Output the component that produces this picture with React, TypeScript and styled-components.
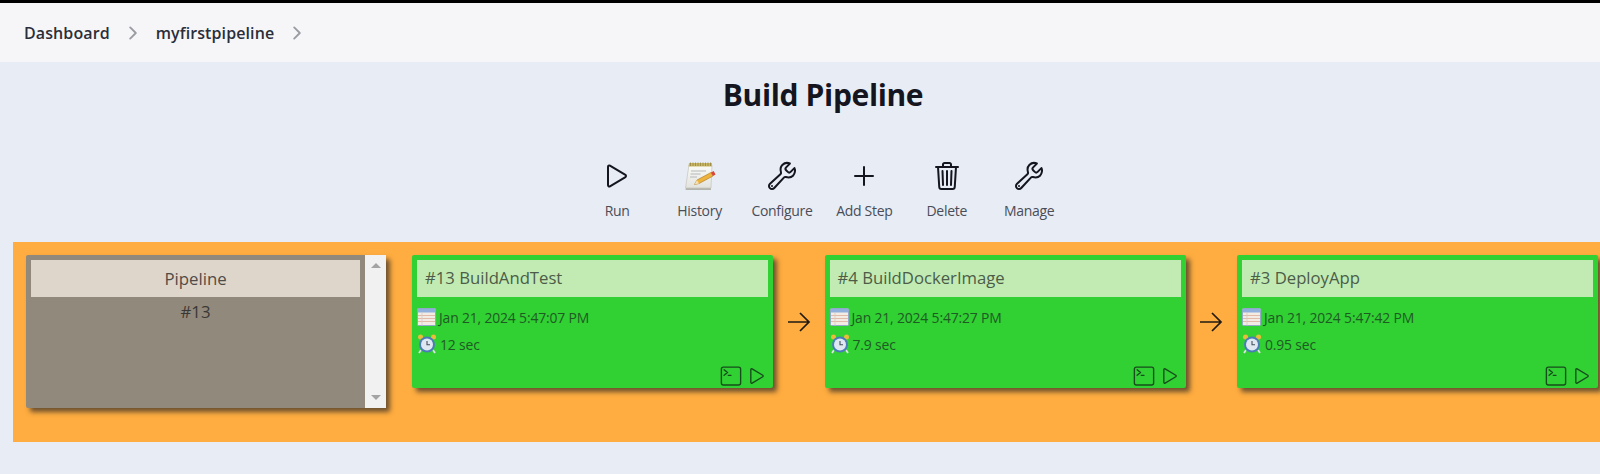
import React from "react";
import styled, { createGlobalStyle } from "styled-components";
import {
  IoAddOutline,
  IoBuildOutline,
  IoChevronForwardOutline,
  IoPlayOutline,
  IoTerminalOutline,
  IoTrashOutline,
} from "react-icons/io5";

const GlobalStyle = createGlobalStyle`
  html, body {
    margin: 0;
    padding: 0;
    height: 474px;
    overflow: hidden;
    background: #e8ecf4;
  }
  body {
    font-family: "Open Sans", "Noto Sans", "Liberation Sans", sans-serif;
  }
`;

const Page = styled.div`
  width: 1600px;
  height: 474px;
  overflow: hidden;
  border-top: 3px solid #000;
  box-sizing: border-box;
`;

const Breadcrumbs = styled.nav`
  height: 59px;
  background: #f6f6f9;
  display: flex;
  align-items: center;
  padding-left: 24px;
  color: #2b2e38;
  font-size: 16px;
  font-weight: 600;
  letter-spacing: 0.1px;
`;

const Crumb = styled.span`
  line-height: 20px;
`;

const CrumbSep = styled.span`
  display: flex;
  color: #9a9ca3;
  font-size: 20px;
  margin: 0 13px;
`;

const Title = styled.h1`
  margin: 12px 0 0;
  padding-left: 46px;
  height: 41px;
  line-height: 41px;
  text-align: center;
  color: #14151f;
  font-size: 30px;
  font-weight: 700;
  letter-spacing: -0.35px;
`;

const Toolbar = styled.div`
  margin-top: 43px;
  padding-left: 576px;
  display: flex;
  height: 84px;
`;

const Tool = styled.div`
  width: 82.4px;
  display: flex;
  flex-direction: column;
  align-items: center;
`;

const ToolIcon = styled.div`
  height: 36px;
  font-size: 32px;
  color: #14151f;
  display: flex;
  align-items: center;
  justify-content: center;
`;

const ToolLabel = styled.div`
  margin-top: 8px;
  font-size: 14px;
  line-height: 18px;
  letter-spacing: -0.3px;
  color: #4a4d57;
  white-space: nowrap;
`;

const Panel = styled.section`
  margin-left: 13px;
  height: 200px;
  padding: 13px;
  box-sizing: border-box;
  background: #ffad40;
  display: flex;
  align-items: flex-start;
  overflow: hidden;
`;

const RunList = styled.div`
  flex: none;
  width: 360px;
  height: 153px;
  display: flex;
  border-radius: 2px;
  background: #92897d;
  box-shadow: 4px 4px 5px rgba(60, 50, 40, 0.75);
`;

const RunListBody = styled.div`
  flex: 1;
  padding: 5px;
  text-align: center;
  color: #3b3833;
  font-size: 16.8px;
`;

const RunListHeader = styled.div`
  height: 37px;
  line-height: 37px;
  background: #dfd6cb;
  color: #4f4b46;
`;

const RunNumber = styled.div`
  margin-top: 3px;
  line-height: 24px;
`;

const Scrollbar = styled.div`
  width: 21px;
  background: #f1f1f1;
  display: flex;
  flex-direction: column;
  justify-content: space-between;
  align-items: center;
  padding: 8px 0;
  box-sizing: border-box;
`;

const ScrollArrow = styled.div<{ $down?: boolean }>`
  width: 0;
  height: 0;
  border-left: 5px solid transparent;
  border-right: 5px solid transparent;
  ${({ $down }) =>
    $down ? "border-top: 5px solid #a3a3a3;" : "border-bottom: 5px solid #a3a3a3;"}
`;

const Card = styled.div<{ $first?: boolean }>`
  flex: none;
  width: 361px;
  height: 133px;
  margin-left: ${({ $first }) => ($first ? "26px" : "0")};
  padding: 5px;
  box-sizing: border-box;
  display: flex;
  flex-direction: column;
  background: #31d033;
  border-radius: 2px;
  box-shadow: 4px 4px 5px rgba(60, 50, 40, 0.75);
  color: #1f5a24;
`;

const CardTitle = styled.div`
  height: 37px;
  line-height: 35px;
  padding-left: 8px;
  margin-bottom: 3px;
  background: #c1ebb3;
  color: #4c5c48;
  font-size: 16.7px;
`;

const MetaRow = styled.div`
  display: flex;
  align-items: center;
  height: 20px;
  margin-top: 7px;
  font-size: 13.9px;
  letter-spacing: -0.15px;
  white-space: nowrap;
`;

const MetaText = styled.span`
  margin-left: 3px;
`;

const CardActions = styled.div`
  margin-top: auto;
  margin-bottom: -4px;
  display: flex;
  justify-content: flex-end;
  align-items: center;
  gap: 4px;
  color: #174c1c;
  font-size: 22px;
`;

const Connector = styled.div`
  flex: none;
  width: 51.5px;
  height: 133px;
  color: #201a10;
  display: flex;
  align-items: center;
  justify-content: center;
`;

const ConnectorArrow = () => (
  <svg width="24" height="22" viewBox="0 0 24 22" fill="none" stroke="currentColor" strokeWidth="1.7">
    <path d="M1 11h21M13 2l9 9-9 9" />
  </svg>
);

const NotepadIcon = () => (
  <svg width="32" height="29" viewBox="0 0 32 29">
    <defs>
      <linearGradient id="notepadPage" x1="0" y1="0" x2="0" y2="1">
        <stop offset="0" stopColor="#fbfbf8" />
        <stop offset="1" stopColor="#e2e2de" />
      </linearGradient>
    </defs>
    <path d="M2 25.5h25v2.500H1.500z" fill="#b4b4ae" />
    <path d="M5 3h23l-1 23H1.500z" fill="url(#notepadPage)" stroke="#c4c4bd" strokeWidth="0.7" />
    <path d="M5 1h23v3.500H4.500z" fill="#c9b765" />
    <path
      d="M6.500 .5v3.500M9 .5v3.500M11.500 .5v3.500M14 .5v3.500M16.500 .5v3.500M19 .5v3.500M21.500 .5v3.500M24 .5v3.500M26.500 .5v3.500"
      stroke="#96883f"
      strokeWidth="0.8"
    />
    <path d="M7 9h15M6.500 12h10M6 15h7" stroke="#b5b8bc" strokeWidth="1" />
    <path d="M10.500 22.500l2.500-4.500 14-7.500 2 3.500-14 7.500z" fill="#eeb33d" stroke="#a9761f" strokeWidth="0.6" />
    <path d="M27 10.500l2 3.500 2.500-1.500-1.800-3.500z" fill="#d9463c" />
    <path d="M10.500 22.500l2.500-4.500 2 3.500z" fill="#f3e0b4" />
  </svg>
);

const TableIcon = () => (
  <svg width="19" height="19" viewBox="0 0 19 19">
    <rect x="0.5" y="0.5" width="18" height="17" rx="1" fill="#f2ece4" stroke="#93a8c8" />
    <rect x="1" y="1" width="17" height="3.5" fill="#8fb0dc" />
    <path d="M1 7.5h17M1 10.5h17M1 13.500h17" stroke="#e3b9a8" strokeWidth="1.2" />
    <path d="M5 4.5v13" stroke="#d3cdc7" strokeWidth="0.8" />
  </svg>
);

const ClockIcon = () => (
  <svg width="20" height="20" viewBox="0 0 20 20">
    <circle cx="3.5" cy="3" r="2.500" fill="#e8bd3a" />
    <circle cx="16.5" cy="3" r="2.500" fill="#e8bd3a" />
    <path d="M4 16l-2 3M16 16l2 3" stroke="#dfe3e8" strokeWidth="1.8" />
    <circle cx="10" cy="10.5" r="8" fill="#4a7db8" />
    <circle cx="10" cy="10.5" r="6" fill="#dfe8f1" />
    <path d="M10 7v3.700h3" fill="none" stroke="#45505e" strokeWidth="1.1" />
  </svg>
);

const tools = [
  { label: "Run", icon: <IoPlayOutline /> },
  { label: "History", icon: <NotepadIcon /> },
  { label: "Configure", icon: <IoBuildOutline /> },
  { label: "Add Step", icon: <IoAddOutline /> },
  { label: "Delete", icon: <IoTrashOutline /> },
  { label: "Manage", icon: <IoBuildOutline /> },
];

const jobs = [
  { title: "#13 BuildAndTest", date: "Jan 21, 2024 5:47:07 PM", duration: "12 sec" },
  { title: "#4 BuildDockerImage", date: "Jan 21, 2024 5:47:27 PM", duration: "7.9 sec" },
  { title: "#3 DeployApp", date: "Jan 21, 2024 5:47:42 PM", duration: "0.95 sec" },
];

const App = () => (
  <Page>
    <GlobalStyle />
    <Breadcrumbs>
      <Crumb>Dashboard</Crumb>
      <CrumbSep>
        <IoChevronForwardOutline />
      </CrumbSep>
      <Crumb>myfirstpipeline</Crumb>
      <CrumbSep>
        <IoChevronForwardOutline />
      </CrumbSep>
    </Breadcrumbs>
    <Title>Build Pipeline</Title>
    <Toolbar>
      {tools.map((tool) => (
        <Tool key={tool.label}>
          <ToolIcon>{tool.icon}</ToolIcon>
          <ToolLabel>{tool.label}</ToolLabel>
        </Tool>
      ))}
    </Toolbar>
    <Panel>
      <RunList>
        <RunListBody>
          <RunListHeader>Pipeline</RunListHeader>
          <RunNumber>#13</RunNumber>
        </RunListBody>
        <Scrollbar>
          <ScrollArrow />
          <ScrollArrow $down />
        </Scrollbar>
      </RunList>
      {jobs.map((job, index) => (
        <React.Fragment key={job.title}>
          {index > 0 && (
            <Connector>
              <ConnectorArrow />
            </Connector>
          )}
          <Card $first={index === 0}>
            <CardTitle>{job.title}</CardTitle>
            <MetaRow>
              <TableIcon />
              <MetaText>{job.date}</MetaText>
            </MetaRow>
            <MetaRow>
              <ClockIcon />
              <MetaText>{job.duration}</MetaText>
            </MetaRow>
            <CardActions>
              <IoTerminalOutline />
              <IoPlayOutline />
            </CardActions>
          </Card>
        </React.Fragment>
      ))}
    </Panel>
  </Page>
);

export default App;
